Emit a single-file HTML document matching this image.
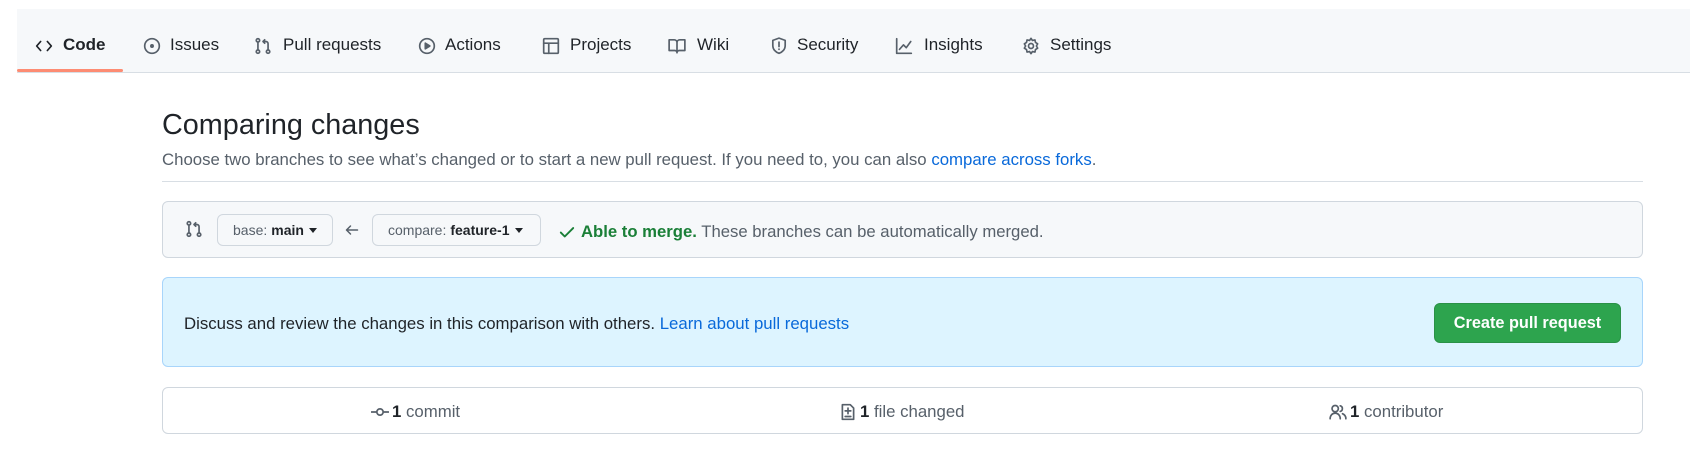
<!DOCTYPE html>
<html><head><meta charset="utf-8"><style>
*{box-sizing:border-box;margin:0;padding:0}
body{width:1690px;height:468px;background:#fff;font-family:"Liberation Sans",sans-serif;color:#1f2328;position:relative;overflow:hidden}
.nav{position:absolute;left:17px;right:0;top:9px;height:64px;background:#f6f8fa;border-bottom:1px solid #d8dee4}
.ni{position:absolute;top:0;height:64px;padding-top:8px;display:flex;align-items:center;font-size:17px;color:#1f2328}
.ni svg{position:absolute;top:28px}
.ul{position:absolute;left:0;top:60px;width:106px;height:3px;background:#fd8c73;border-radius:2px}
.a{position:absolute;white-space:nowrap}
.box{position:absolute;left:162px;width:1481px;border:1px solid #d0d7de;border-radius:6px}
.btn{position:absolute;top:12px;height:32px;border:1px solid #d0d7de;border-radius:6px;background:#f6f8fa;font-size:14px;color:#57606a;display:flex;align-items:center;padding-left:15px}
.btn b{color:#1f2328;font-weight:600;margin-left:4px}
.caret{display:inline-block;border-left:4.5px solid transparent;border-right:4.5px solid transparent;border-top:5px solid #1f2328;margin-left:5px}
svg{fill:none;stroke:#57606a;stroke-width:1.5;stroke-linecap:round;stroke-linejoin:round}
</style></head><body>
<div class="nav">
<div class="ul"></div>
<div class="ni" style="left:18px"><svg width="18" height="18" viewBox="0 0 16 16" style="left:0"><path d="M5 4L1.5 8 5 12M11 4l3.5 4-3.5 4" stroke="#1f2328"/></svg><span style="margin-left:28px;font-weight:600">Code</span></div>
<div class="ni" style="left:126px"><svg width="18" height="18" viewBox="0 0 16 16" style="left:0"><circle cx="8" cy="8" r="6.5"/><circle cx="8" cy="8" r="1" fill="#57606a"/></svg><span style="margin-left:27px">Issues</span></div>
<div class="ni" style="left:237px"><svg width="18" height="18" viewBox="0 0 16 16" style="left:0"><circle cx="3.5" cy="3" r="1.5"/><circle cx="3.5" cy="13" r="1.5"/><circle cx="12.5" cy="13" r="1.5"/><path d="M3.5 4.5v7M12.5 11.5V6a2 2 0 0 0-2-2H8M9.5 2.5L8 4l1.5 1.5"/></svg><span style="margin-left:29px">Pull requests</span></div>
<div class="ni" style="left:401px"><svg width="18" height="18" viewBox="0 0 16 16" style="left:0"><circle cx="8" cy="8" r="6.5"/><path d="M6.5 5.5v5l4-2.5z" fill="#57606a"/></svg><span style="margin-left:27px">Actions</span></div>
<div class="ni" style="left:525px"><svg width="18" height="18" viewBox="0 0 16 16" style="left:0"><rect x="1.5" y="1.5" width="13" height="13" rx="1"/><path d="M1.5 5.5h13M6 5.5v9"/></svg><span style="margin-left:28px">Projects</span></div>
<div class="ni" style="left:651px"><svg width="18" height="18" viewBox="0 0 16 16" style="left:0"><path d="M1 2.5h4.5A2.5 2.5 0 0 1 8 5v9a2 2 0 0 0-2-2H1zM15 2.5h-4.5A2.5 2.5 0 0 0 8 5v9a2 2 0 0 1 2-2h5z"/></svg><span style="margin-left:29px">Wiki</span></div>
<div class="ni" style="left:753px"><svg width="18" height="18" viewBox="0 0 16 16" style="left:0"><path d="M8 1l5.5 2v4.5c0 3.5-2.5 6-5.5 7-3-1-5.5-3.5-5.5-7V3z"/><path d="M8 4.5v4M8 10.8v.2"/></svg><span style="margin-left:27px">Security</span></div>
<div class="ni" style="left:878px"><svg width="18" height="18" viewBox="0 0 16 16" style="left:0"><path d="M1.5 1.5v13h13M4 11l3.5-4 2.5 2.5L14 4"/></svg><span style="margin-left:29px">Insights</span></div>
<div class="ni" style="left:1005px"><svg width="18" height="18" viewBox="0 0 16 16" style="left:0"><circle cx="8" cy="8" r="2.2"/><path d="M8 1.2l1.3 1.9 2.2-.5.5 2.2 1.9 1.3L12.8 8l1.1 1.9-1.9 1.3-.5 2.2-2.2-.5L8 14.8l-1.3-1.9-2.2.5-.5-2.2-1.9-1.3L3.2 8 2.1 6.1 4 4.8l.5-2.2 2.2.5z"/></svg><span style="margin-left:28px">Settings</span></div>
</div>

<div class="a" style="left:162px;top:109px;font-size:28.8px;color:#1f2328">Comparing changes</div>
<div class="a" style="left:162px;top:150px;font-size:16.8px;color:#57606a">Choose two branches to see what’s changed or to start a new pull request. If you need to, you can also <span style="color:#0969da">compare across forks</span>.</div>
<div class="a" style="left:162px;top:181px;width:1481px;height:1px;background:#d8dee4"></div>

<div class="box" style="top:201px;height:57px;background:#f6f8fa">
<svg width="18" height="18" viewBox="0 0 16 16" style="position:absolute;left:22px;top:18px"><circle cx="3.5" cy="3" r="1.5"/><circle cx="3.5" cy="13" r="1.5"/><circle cx="12.5" cy="13" r="1.5"/><path d="M3.5 4.5v7M12.5 11.5V6a2 2 0 0 0-2-2H8M9.5 2.5L8 4l1.5 1.5"/></svg>
<div class="btn" style="left:54px;width:116px">base:<b>main</b><span class="caret"></span></div>
<svg width="16" height="16" viewBox="0 0 16 16" style="position:absolute;left:181px;top:20px"><path d="M13.5 8h-11M6.5 4L2.5 8l4 4"/></svg>
<div class="btn" style="left:209px;width:169px">compare:<b>feature-1</b><span class="caret"></span></div>
<svg width="18" height="18" viewBox="0 0 16 16" style="position:absolute;left:395px;top:21px;stroke:#1a7f37;stroke-width:1.7"><path d="M2.5 8.5l3.5 3.5 7.5-7.5"/></svg>
<div class="a" style="left:418px;top:20px;font-size:16.7px;color:#57606a"><b style="color:#1a7f37">Able to merge.</b> These branches can be automatically merged.</div>
</div>

<div class="box" style="top:277px;height:90px;background:#ddf4ff;border-color:#a8d5fb">
<div class="a" style="left:21px;top:36px;font-size:16.8px;color:#1f2328">Discuss and review the changes in this comparison with others. <span style="color:#0969da">Learn about pull requests</span></div>
<div class="a" style="left:1271px;top:25px;width:187px;height:40px;background:#2da44e;border:1px solid #2a9147;border-radius:6px;color:#fff;font-weight:600;font-size:16.3px;display:flex;align-items:center;justify-content:center">Create pull request</div>
</div>

<div class="box" style="top:387px;height:47px;background:#fff">
<div class="a" style="left:208px;top:14px;font-size:16.8px;color:#57606a;display:flex;align-items:center"><svg width="18" height="18" viewBox="0 0 16 16"><circle cx="8" cy="8" r="2.8"/><path d="M0.5 8h4.5M11 8h4.5"/></svg><b style="color:#1f2328;margin-left:3px">1</b>&nbsp;commit</div>
<div class="a" style="left:676px;top:14px;font-size:16.8px;color:#57606a;display:flex;align-items:center"><svg width="18" height="18" viewBox="0 0 16 16"><path d="M3 1.5h7l3 3v10H3z"/><path d="M8 4.5v5M5.5 7h5M5.5 12h5"/></svg><b style="color:#1f2328;margin-left:3px">1</b>&nbsp;file changed</div>
<div class="a" style="left:1166px;top:14px;font-size:16.8px;color:#57606a;display:flex;align-items:center"><svg width="18" height="18" viewBox="0 0 16 16"><circle cx="5.5" cy="5" r="2.8"/><path d="M1 14c0-3 2-5 4.5-5S10 11 10 14M10 2.5a2.6 2.6 0 0 1 0 5M12 9.5c1.7.7 3 2.3 3 4.5"/></svg><b style="color:#1f2328;margin-left:3px">1</b>&nbsp;contributor</div>
</div>
</body></html>
